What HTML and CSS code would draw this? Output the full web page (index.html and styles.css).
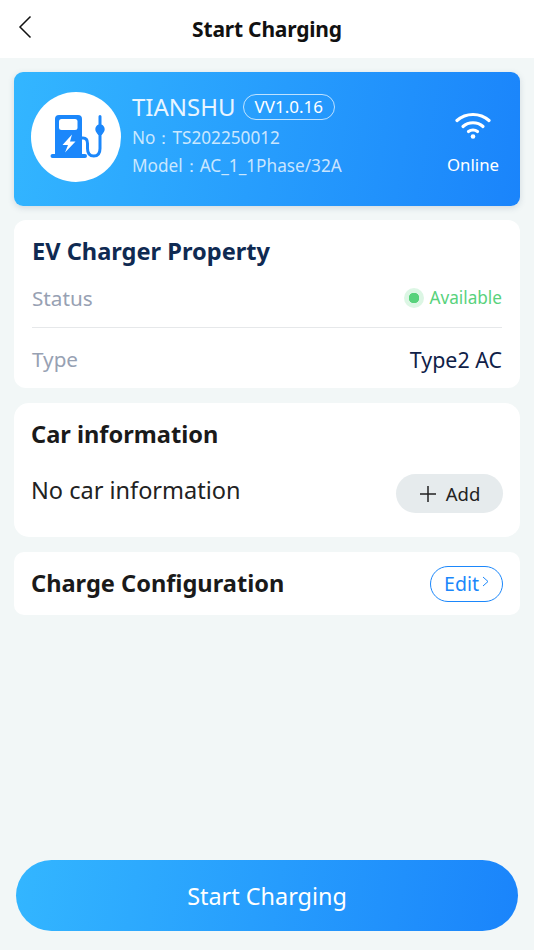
FILE: index.html
```html
<!DOCTYPE html>
<html lang="en">
<head>
<meta charset="utf-8">
<title>Start Charging</title>
<link rel="stylesheet" href="styles.css">
</head>
<body>
<div class="page">
  <header class="topbar">
    <svg class="back" viewBox="0 0 14 24" width="14" height="24"><path d="M12.500 1.500 L2 12 L12.500 22.500" fill="none" stroke="#111" stroke-width="1.500"/></svg>
    <h1 class="title">Start Charging</h1>
  </header>
  <main class="content">
    <section class="hero">
      <div class="avatar">
        <svg viewBox="0 0 60 45" width="60" height="45">
          <path fill="#1b87fb" d="M9 1h19a4 4 0 0 1 4 4v35h3a2 2 0 0 1 0 4H2.500a2 2 0 0 1 0-4H5V5a4 4 0 0 1 4-4z"/>
          <rect x="9" y="5" width="18.500" height="11" rx="2.500" fill="#fff"/>
          <path fill="#fff" d="M22 20.500 L12.500 31 H18 L15 38.500 L25.500 27.500 H20 Z"/>
          <path fill="none" stroke="#1b87fb" stroke-width="3" stroke-linecap="round" d="M31 24 h2 c3 0 4.500 2 4.500 5.500 v5 c0 5 2.500 7.500 6.300 7.500 s6.200-2.500 6.200-7.500 V19"/>
          <path fill="#1b87fb" d="M50 1 a1.500 1.500 0 0 1 1.500 1.500 v8 c2 1 3.200 2.500 3.200 4.700 c0 2.400-1.700 4-3 5.800 h-3.400 c-1.300-1.800-3-3.400-3-5.800 c0-2.200 1.200-3.700 3.200-4.700 v-8 a1.500 1.500 0 0 1 1.500-1.500z"/>
        </svg>
      </div>
      <div class="device">
        <div class="device-name"><span class="brand">TIANSHU</span><span class="version">VV1.0.16</span></div>
        <p class="meta">No：TS202250012</p>
        <p class="meta">Model：AC_1_1Phase/32A</p>
      </div>
      <div class="online">
        <svg viewBox="0 0 36 28" width="36" height="28">
          <g fill="none" stroke="#fff" stroke-width="3.200" stroke-linecap="round">
            <path d="M2 9.500 C11 1.500 25 1.500 34 9.500"/>
            <path d="M8 15.500 C13.500 10.500 22.500 10.500 28 15.500"/>
            <path d="M13.500 20.500 C16 18.500 20 18.500 22.500 20.500"/>
          </g>
          <circle cx="18" cy="25.500" r="2.300" fill="#fff"/>
        </svg>
        <span class="online-label">Online</span>
      </div>
    </section>

    <section class="card property">
      <h2 class="card-title navy">EV Charger Property</h2>
      <div class="row row-status">
        <span class="label">Status</span>
        <span class="status"><i class="dot"></i>Available</span>
      </div>
      <div class="row row-type">
        <span class="label">Type</span>
        <span class="value">Type2 AC</span>
      </div>
    </section>

    <section class="card car">
      <h2 class="card-title">Car information</h2>
      <div class="car-row">
        <span class="empty">No car information</span>
        <span class="add">
          <svg viewBox="0 0 18 18" width="18" height="18"><path d="M9 1v16M1 9h16" stroke="#222" stroke-width="1.500" fill="none"/></svg>
          Add
        </span>
      </div>
    </section>

    <section class="card config">
      <h2 class="card-title config-title">Charge Configuration</h2>
      <span class="edit">Edit<svg viewBox="0 0 7 11" width="7" height="11"><path d="M1 1l5 4.500-5 4.500" fill="none" stroke="#1b87fb" stroke-width="1"/></svg></span>
    </section>

    <button class="start">Start Charging</button>
  </main>
</div>
</body>
</html>
```

FILE: styles.css
```css
* { box-sizing: border-box; }
html, body { margin: 0; padding: 0; }
body { font-family: "Noto Sans", "Open Sans", sans-serif; }
.page {
  width: 534px;
  height: 950px;
  display: flex;
  flex-direction: column;
  background: #f2f7f7;
  overflow: hidden;
}
.topbar {
  height: 58px;
  flex: none;
  background: #fff;
  display: flex;
  align-items: center;
  justify-content: center;
  position: relative;
}
.back { position: absolute; left: 18px; top: 15px; }
.title { margin: 0; font-size: 21px; font-weight: 700; color: #111; letter-spacing: -0.2px; }
.content {
  flex: 1;
  display: flex;
  flex-direction: column;
  padding: 14px 14px 19px;
}
.hero {
  height: 134px;
  border-radius: 9px;
  background: linear-gradient(100deg, #33b6ff 0%, #1a84fb 100%);
  box-shadow: 0 2px 6px rgba(60, 90, 120, .18);
  display: flex;
  align-items: center;
  padding: 0 20px 0 17px;
  color: #fff;
}
.avatar {
  width: 90px;
  height: 90px;
  flex: none;
  border-radius: 50%;
  background: #fff;
  display: flex;
  align-items: center;
  justify-content: center;
  margin: -5px 11px 0 0;
  padding-left: 8px;
}
.device { flex: 1; min-width: 0; margin-top: -7px; }
.device-name { display: flex; align-items: center; height: 30px; margin-bottom: 2px; }
.brand { font-size: 24px; color: #e8f5ff; }
.version {
  margin-left: 7px;
  height: 26px;
  padding: 0 11px;
  border: 1px solid rgba(255, 255, 255, .7);
  border-radius: 13px;
  font-size: 17px;
  line-height: 24px;
  color: #fff;
}
.meta { margin: 0; font-size: 17.200px; line-height: 28px; color: rgba(255, 255, 255, .75); }
.online { width: 54px; display: flex; flex-direction: column; align-items: center; gap: 15px; margin-top: 8px; }
.online-label { font-size: 16.800px; line-height: 22px; color: #fff; }

.card { background: #fff; border-radius: 12px; }
.card-title { margin: 0; font-size: 23.600px; font-weight: 700; color: #1a1a1a; }
.navy { color: #0f2a52; }
.property { margin-top: 14px; height: 168px; padding: 15px 18px 0; }
.row { display: flex; align-items: center; justify-content: space-between; }
.row-status { height: 60px; margin-top: 1px; border-bottom: 1px solid #e6e8ea; }
.row-type { height: 58px; padding-top: 4px; }
.label { font-size: 20.700px; color: #97a1b3; }
.value { font-size: 21.400px; color: #0f2148; }
.status { display: flex; align-items: center; font-size: 17.200px; color: #58d27c; }
.dot {
  width: 20px;
  height: 20px;
  margin-right: 5px;
  border-radius: 50%;
  background: radial-gradient(circle, #58d27c 0 5px, #dcf6e4 5.500px);
}
.car { margin-top: 15px; height: 134px; padding: 15px 17px 0; border-radius: 15px; }
.car-row { display: flex; justify-content: space-between; align-items: flex-start; margin-top: 22px; }
.empty { font-size: 23.500px; line-height: 36px; color: #222; }
.add {
  margin-top: 2px;
  width: 107px;
  height: 39px;
  border-radius: 20px;
  background: #e6ebed;
  display: flex;
  align-items: center;
  justify-content: center;
  gap: 9px;
  font-size: 18.500px;
  color: #222;
}
.config {
  margin-top: 15px;
  height: 63px;
  padding: 0 17px;
  display: flex;
  align-items: center;
  justify-content: space-between;
  border-radius: 10px;
}
.config-title { margin-top: -2px; }
.edit {
  width: 73px;
  height: 36px;
  border: 1px solid #1b87fb;
  border-radius: 18px;
  display: flex;
  align-items: center;
  justify-content: center;
  gap: 3px;
  font-size: 19.500px;
  color: #1b87fb;
}
.edit svg { margin-top: -4px; }
.start {
  margin: auto 2px 0;
  height: 71px;
  border: 0;
  border-radius: 36px;
  background: linear-gradient(100deg, #33b6ff 0%, #1a84fb 100%);
  color: #fff;
  font: 400 23.400px "Noto Sans", "Open Sans", sans-serif;
}
```
